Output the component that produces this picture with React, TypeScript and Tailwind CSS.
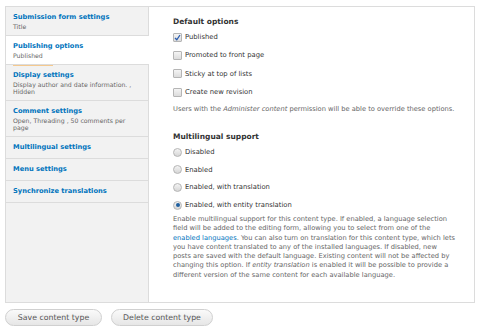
import React from 'react';

const font = { fontFamily: '"DejaVu Sans", Verdana, sans-serif' };

const tabs = [
  { title: 'Submission form settings', sub: ['Title'] },
  { title: 'Publishing options', sub: ['Published'], active: true },
  { title: 'Display settings', sub: ['Display author and date information. ,', 'Hidden'] },
  { title: 'Comment settings', sub: ['Open, Threading , 50 comments per', 'page'] },
  { title: 'Multilingual settings', sub: [] },
  { title: 'Menu settings', sub: [] },
  { title: 'Synchronize translations', sub: [] },
];

const Checkbox = ({ checked, label }: { checked?: boolean; label: string }) => (
  <div className="flex items-center h-[18.3px] gap-[3px]">
    <span className="w-[9px] h-[9px] border border-[#b5b5b5] bg-gradient-to-b from-[#f4f4f4] to-[#dcdcdc] rounded-[1px] flex items-center justify-center">
      {checked && (
        <svg width="7" height="7" viewBox="0 0 7 7">
          <path d="M1 4 L2.8 5.8 L6 1" fill="none" stroke="#2a5db0" strokeWidth="1.3" />
        </svg>
      )}
    </span>
    <span className="text-[6.8px] text-[#333]">{label}</span>
  </div>
);

const Radio = ({ checked, label }: { checked?: boolean; label: string }) => (
  <div className="flex items-center h-[17.7px] gap-[3px]">
    <span className="w-[9px] h-[9px] rounded-full border border-[#b5b5b5] bg-gradient-to-b from-[#f4f4f4] to-[#d6d6d6] flex items-center justify-center">
      {checked && <span className="w-[4px] h-[4px] rounded-full bg-[#1f5f9f]" />}
    </span>
    <span className="text-[6.8px] text-[#333]">{label}</span>
  </div>
);

const App: React.FC = () => {
  return (
    <div className="w-[480px] h-[328px] bg-white pt-[6px] pl-[5px]" style={font}>
      {/* Vertical tabs box */}
      <div className="w-[470px] h-[297px] border border-[#dcdcdc] flex">
        <div className="w-[143px] bg-[#f2f2f2] border-r border-[#dcdcdc] flex flex-col">
          {tabs.map((t, i) => (
            <div
              key={i}
              className={
                'relative px-[7px] pt-[5px] pb-[5px] border-b border-[#dcdcdc] ' +
                (t.active ? 'bg-white -mr-px' : '')
              }
            >
              {i === 2 && <span className="absolute left-[7px] top-0 w-[40px] h-px bg-[#f5c98e]" />}
              <div className="text-[6.7px] font-bold text-[#0074bd] leading-[11px]">{t.title}</div>
              {t.sub.map((s, j) => (
                <div key={j} className="text-[6.2px] text-[#666] leading-[7px]">{s}</div>
              ))}
            </div>
          ))}
        </div>

        <div className="flex-1 pl-[24px] pr-[4px] pt-[9px]">
          <div className="text-[7.5px] font-bold text-[#333] leading-[12px]">Default options</div>
          <Checkbox checked label="Published" />
          <Checkbox label="Promoted to front page" />
          <Checkbox label="Sticky at top of lists" />
          <Checkbox label="Create new revision" />
          <p className="text-[6.7px] text-[#666] leading-[9px] mt-[4px]">
            Users with the <em>Administer content</em> permission will be able to override these options.
          </p>

          <div className="text-[7.5px] font-bold text-[#333] leading-[12px] mt-[17px]">Multilingual support</div>
          <Radio label="Disabled" />
          <Radio label="Enabled" />
          <Radio label="Enabled, with translation" />
          <Radio checked label="Enabled, with entity translation" />
          <p className="text-[6.7px] text-[#666] leading-[9.3px] mt-[1px] whitespace-nowrap">
            Enable multilingual support for this content type. If enabled, a language selection<br />
            field will be added to the editing form, allowing you to select from one of the<br />
            <span className="text-[#0074bd]">enabled languages</span>. You can also turn on translation for this content type, which lets<br />
            you have content translated to any of the installed languages. If disabled, new<br />
            posts are saved with the default language. Existing content will not be affected by<br />
            changing this option. If <em>entity translation</em> is enabled it will be possible to provide a<br />
            different version of the same content for each available language.
          </p>
        </div>
      </div>

      <div className="flex gap-[9px] mt-[6px]">
        <button className="h-[17px] w-[97px] rounded-full border border-[#d0d0d0] bg-gradient-to-b from-[#fafafa] to-[#e6e6e6] text-[7.8px] text-[#555]">
          Save content type
        </button>
        <button className="h-[17px] w-[102px] rounded-full border border-[#d0d0d0] bg-gradient-to-b from-[#fafafa] to-[#e6e6e6] text-[7.8px] text-[#555]">
          Delete content type
        </button>
      </div>
    </div>
  );
};

export default App;
